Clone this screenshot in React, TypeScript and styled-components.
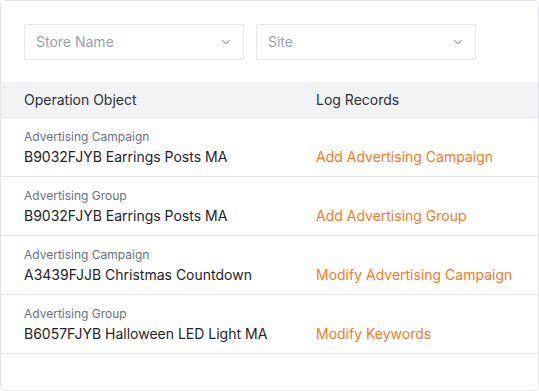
import styled, { createGlobalStyle } from 'styled-components';
import { ChevronDown } from 'lucide-react';

interface LogRow {
  kind: string;
  name: string;
  action: string;
}

const rows: LogRow[] = [
  { kind: 'Advertising Campaign', name: 'B9032FJYB Earrings Posts MA', action: 'Add Advertising Campaign' },
  { kind: 'Advertising Group', name: 'B9032FJYB Earrings Posts MA', action: 'Add Advertising Group' },
  { kind: 'Advertising Campaign', name: 'A3439FJJB Christmas Countdown', action: 'Modify Advertising Campaign' },
  { kind: 'Advertising Group', name: 'B6057FJYB Halloween LED Light MA', action: 'Modify Keywords' },
];

const filters = ['Store Name', 'Site'];

const GlobalStyle = createGlobalStyle`
  * { box-sizing: border-box; }
  body {
    margin: 0;
    background: #ffffff;
    font-family: Inter, 'Noto Sans', sans-serif;
  }
`;

export default function App() {
  return (
    <>
      <GlobalStyle />
      <Card>
        <FilterBar>
          {filters.map((f) => (
            <Select key={f}>
              <Placeholder>{f}</Placeholder>
              <ChevronDown size={14} strokeWidth={1.6} color="#6b7280" />
            </Select>
          ))}
        </FilterBar>
        <HeadRow>
          <HeadCell>Operation Object</HeadCell>
          <HeadCell>Log Records</HeadCell>
        </HeadRow>
        {rows.map((r, i) => (
          <Row key={i}>
            <ObjectCell>
              <Kind>{r.kind}</Kind>
              <Name>{r.name}</Name>
            </ObjectCell>
            <Action>{r.action}</Action>
          </Row>
        ))}
      </Card>
    </>
  );
}

const Card = styled.div`
  width: 539px;
  height: 391px;
  border: 1px solid #e4e5eb;
  border-radius: 5px;
  background: #fff;
  overflow: hidden;
`;

const FilterBar = styled.div`
  display: flex;
  gap: 12px;
  padding: 23px 23px 22px;
`;

const Select = styled.div`
  width: 220px;
  height: 36px;
  display: flex;
  align-items: center;
  justify-content: space-between;
  padding: 0 10px 1px 11px;
  border: 1px solid #e5e7eb;
  border-radius: 2px;
`;

const Placeholder = styled.span`
  font-size: 14px;
  color: #9aa0ab;
`;

const HeadRow = styled.div`
  display: grid;
  grid-template-columns: 292px 1fr;
  height: 36px;
  padding-left: 23px;
  background: #f2f3f5;
  border-bottom: 1px solid #e4e5eb;
`;

const HeadCell = styled.div`
  font-size: 14px;
  line-height: 35px;
  color: #2b2f36;
`;

const Row = styled.div`
  display: grid;
  grid-template-columns: 292px 1fr;
  align-items: end;
  height: 59px;
  padding: 10px 0 8px 23px;
  border-bottom: 1px solid #e4e5eb;
`;

const ObjectCell = styled.div`
  display: flex;
  flex-direction: column;
`;

const Kind = styled.span`
  font-size: 12px;
  line-height: 18px;
  color: #6b7080;
`;

const Name = styled.span`
  font-size: 14px;
  line-height: 22px;
  color: #1f2329;
`;

const Action = styled.span`
  font-size: 14px;
  line-height: 22px;
  color: #f7791f;
`;
